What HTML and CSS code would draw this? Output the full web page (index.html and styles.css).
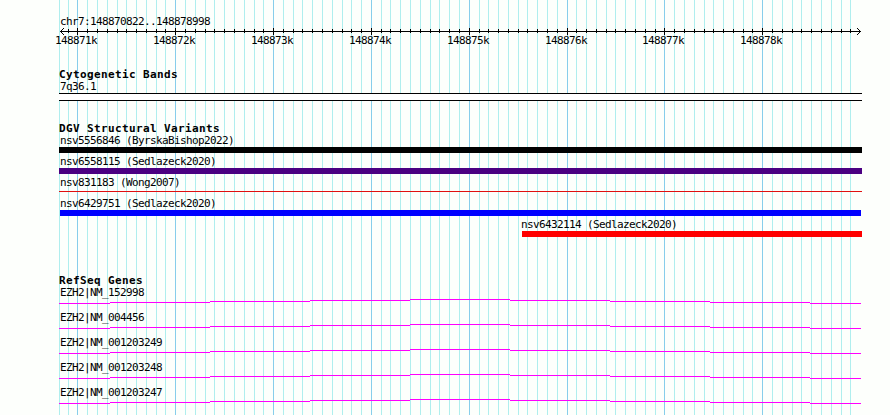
FILE: index.html
```
<!DOCTYPE html>
<html lang="en">
<head>
    <meta charset="UTF-8">
    <title>chr7:148870822..148878998</title>
    <link rel="stylesheet" href="styles.css">
</head>
<body>

    <svg class="grid" width="890" height="415" shape-rendering="crispEdges">
        <path id="minor" class="minor"/>
        <path id="major" class="major"/>
    </svg>

    <div class="panel">
        <div class="label">chr7:148870822..148878998</div>
        <svg class="ruler" width="890" height="22">
            <g shape-rendering="crispEdges">
                <path d="M60 4.5H861"/>
                <path id="ticks"/>
                <path id="bigticks"/>
                <path d="M61 3.5h1M62 2.5h1M63 1.5h1M61 5.5h1M62 6.5h1M63 7.5h1"/>
                <path d="M859 3.5h1M858 2.5h1M857 1.5h1M859 5.5h1M858 6.5h1M857 7.5h1"/>
            </g>
            <g id="numbers"></g>
        </svg>

        <div class="track bands">
            <h2>Cytogenetic Bands</h2>
            <div class="label">7q36.1</div>
            <div class="band"></div>
        </div>

        <div class="track variants">
            <h2>DGV Structural Variants</h2>
            <div class="variant">
                <div class="label">nsv5556846 (ByrskaBishop2022)</div>
                <div class="bar black"></div>
            </div>
            <div class="variant">
                <div class="label">nsv6558115 (Sedlazeck2020)</div>
                <div class="bar indigo"></div>
            </div>
            <div class="variant">
                <div class="label">nsv831183 (Wong2007)</div>
                <div class="bar thin"></div>
            </div>
            <div class="variant">
                <div class="label">nsv6429751 (Sedlazeck2020)</div>
                <div class="bar blue"></div>
            </div>
            <div class="variant partial">
                <div class="label">nsv6432114 (Sedlazeck2020)</div>
                <div class="bar red"></div>
            </div>
        </div>

        <div class="track genes">
            <h2>RefSeq Genes</h2>
            <div class="gene"><div class="label">EZH2|NM_152998</div></div>
            <div class="gene"><div class="label">EZH2|NM_004456</div></div>
            <div class="gene"><div class="label">EZH2|NM_001203249</div></div>
            <div class="gene"><div class="label">EZH2|NM_001203248</div></div>
            <div class="gene"><div class="label">EZH2|NM_001203247</div></div>
        </div>
    </div>

    <script src="script.js"></script>
</body>
</html>
```
FILE: styles.css
```
body {
    margin: 0;
    width: 890px;
    height: 415px;
    overflow: hidden;
    background: #fdfffc;
    color: #000;
    font: 11px/14px "DejaVu Sans Mono", monospace;
}

/* grid lines lie behind every track */
.grid {
    position: absolute;
    top: 0;
    left: 0;
    z-index: -1;
}
.minor {
    stroke: #afeeee;
}
.major {
    stroke: #87ceeb;
}

.panel {
    padding-top: 15px;
}

.label {
    height: 12px;
    padding-left: 60px;
    letter-spacing: -0.622px;
    white-space: pre;
}

.ruler {
    display: block;
}
.ruler path {
    stroke: #000;
    fill: none;
}
.ruler text {
    letter-spacing: -0.622px;
}

h2 {
    margin: 0;
    height: 12px;
    padding-left: 59px;
    font-size: 11px;
    font-weight: bold;
    letter-spacing: 0.378px;
}

.bands {
    padding-top: 19px;
}
.band {
    width: 803px;
    height: 6px;
    margin: 1px 0 0 59px;
    border-top: 1px solid #000;
    border-bottom: 1px solid #000;
    background: #fff;
}

.variants {
    padding-top: 21px;
}
.variant {
    height: 21px;
}
.bar {
    width: 803px;
    height: 6px;
    margin: 1px 0 0 59px;
}
.black {
    background: #000;
}
.indigo {
    background: #4b0082;
}
.thin {
    height: 1px;
    margin-top: 3px;
    background: #e01010;
}
.blue {
    width: 801px;
    margin-left: 60px;
    background: #00f;
}
.partial .label {
    padding-left: 521px;
}
.red {
    width: 340px;
    margin-left: 522px;
    background: #f00;
}

.genes {
    padding-top: 35px;
}
.gene {
    height: 25px;
}
.gene svg {
    display: block;
}
.gene path {
    stroke: #f0f;
}
```
FILE: script.js
```
const major = [77, 175, 273, 371, 469, 567, 664, 762];
const minor = [
    59, 68, 87, 97, 107, 117, 126, 136, 146, 156, 165,
    185, 195, 205, 214, 224, 234, 244, 254, 263,
    283, 293, 302, 312, 322, 332, 342, 351, 361,
    381, 390, 400, 410, 420, 430, 439, 449, 459,
    479, 488, 498, 508, 518, 527, 537, 547, 557,
    576, 586, 596, 606, 615, 625, 635, 645, 655,
    674, 684, 694, 704, 713, 723, 733, 743, 752,
    772, 782, 792, 801, 811, 821, 831, 841, 850,
];

function lines(list, top, height) {
    return list.map(x => `M${x + 0.5} ${top}v${height}`).join('');
}

document.getElementById('minor').setAttribute('d', lines(minor, 0, 415));
document.getElementById('major').setAttribute('d', lines(major, 0, 415));
document.getElementById('ticks').setAttribute('d', lines(minor.slice(1), 2, 4));
document.getElementById('bigticks').setAttribute('d', lines(major, 1, 7));
document.getElementById('numbers').innerHTML = major
    .map((x, i) => `<text x="${x - 22}" y="17">${148871 + i}k</text>`).join('');

// introns arch up to the middle, one pixel every 100
const intron = 'M59 5.5H110M110 4.5H210M210 3.5H310M310 2.5H410M410 1.5H510' +
    'M510 2.5H610M610 3.5H710M710 4.5H810M810 5.5H861';
document.querySelectorAll('.gene').forEach(gene => {
    gene.insertAdjacentHTML('beforeend',
        `<svg width="890" height="8" shape-rendering="crispEdges"><path d="${intron}"/></svg>`);
});
```
